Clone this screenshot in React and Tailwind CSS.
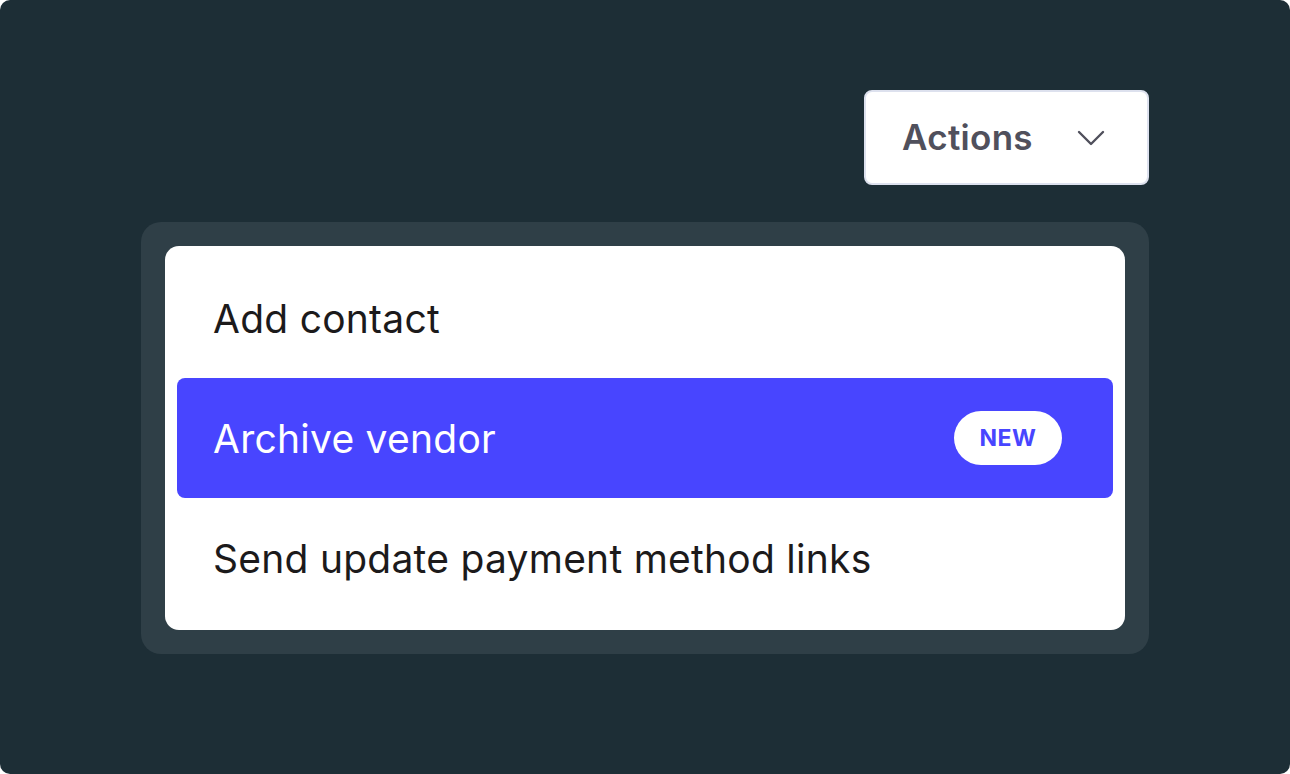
export default function App() {
  return (
    <div className="w-[1290px] h-[774px] bg-white" style={{ fontFamily: 'Inter, "Noto Sans", sans-serif' }}>
      <div className="w-full h-full bg-[#1d2e36] rounded-[10px] flex flex-col items-end pt-[90px] pr-[141px]">
        <button className="w-[285px] h-[95px] bg-white border-2 border-[#dde1ee] rounded-[8px] flex items-center justify-between pl-[36px] pr-[42px]">
          <span className="text-[35px] font-semibold text-[#50505c] tracking-[0.3px]">Actions</span>
          <svg width="28" height="16" viewBox="0 0 28 16" fill="none">
            <path d="M2 2l12 12L26 2" stroke="#50505c" strokeWidth="2.4" strokeLinecap="round" strokeLinejoin="round" />
          </svg>
        </button>
        <div className="mt-[37px] w-[1008px] bg-[#2f3f47] rounded-[20px] p-[24px]">
          <div className="bg-white rounded-[14px] p-[12px] flex flex-col text-[39px] tracking-[0.25px]">
            <div className="h-[120px] flex items-center pl-[36px] pr-[37px] text-[#1c1a1b] pt-[2px]">Add contact</div>
            <div className="h-[120px] flex items-center justify-between pl-[36px] pr-[51px] bg-[#4845ff] rounded-[8px] text-white">
              <span className="pt-[2px]">Archive vendor</span>
              <span className="w-[108px] h-[54px] rounded-full bg-white flex items-center justify-center text-[23px] font-bold text-[#4845ff] tracking-[0.6px]">NEW</span>
            </div>
            <div className="h-[120px] flex items-center pl-[36px] pr-[37px] text-[#1c1a1b] pt-[2px]">Send update payment method links</div>
          </div>
        </div>
      </div>
    </div>
  );
}
